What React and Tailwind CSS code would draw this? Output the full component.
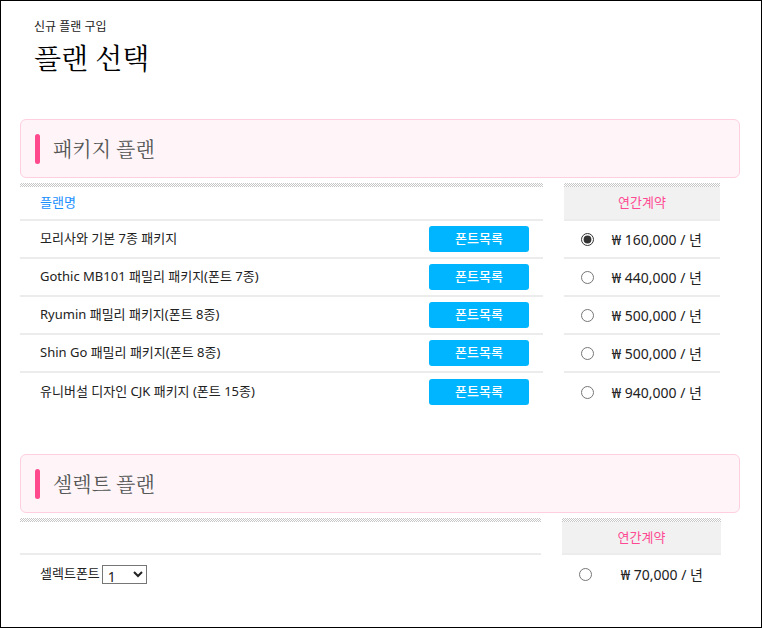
import React from 'react';

const SANS = { fontFamily: '"Noto Sans", "Noto Sans CJK KR", sans-serif' };
const SERIF = { fontFamily: '"Noto Serif CJK KR", "Liberation Serif", serif' };

const packages = [
  { name: '모리사와 기본 7종 패키지', price: '₩ 160,000 / 년', checked: true },
  { name: 'Gothic MB101 패밀리 패키지(폰트 7종)', price: '₩ 440,000 / 년' },
  { name: 'Ryumin 패밀리 패키지(폰트 8종)', price: '₩ 500,000 / 년' },
  { name: 'Shin Go 패밀리 패키지(폰트 8종)', price: '₩ 500,000 / 년' },
  { name: '유니버설 디자인 CJK 패키지 (폰트 15종)', price: '₩ 940,000 / 년' },
];

function Hatch() {
  return (
    <div className="h-[4px] bg-[repeating-conic-gradient(#c8c8c8_0_25%,#ffffff_0_50%)] bg-[length:2px_2px]" />
  );
}

function PlanHeader({ title }) {
  return (
    <div className="flex h-[59px] items-center rounded-[6px] border border-[#ffcfe0] bg-[#fff5f9] pl-[14px]">
      <span className="h-[30px] w-[5px] rounded-full bg-[#ff4a8d]" />
      <h2 className="ml-[13px] text-[20px] text-[#555]" style={SERIF}>
        {title}
      </h2>
    </div>
  );
}

export default function App() {
  return (
    <div className="h-[628px] w-[762px] overflow-hidden border border-black bg-white text-[#222]" style={SANS}>
      {/* page title */}
      <div className="pl-[33px] pt-[17px]">
        <p className="text-[12px] leading-[18px]">신규 플랜 구입</p>
        <h1 className="mt-[1px] text-[28px] leading-[40px] text-black" style={SERIF}>
          플랜 선택
        </h1>
      </div>

      {/* package plans */}
      <div className="ml-[19px] mt-[42px] w-[720px]">
        <PlanHeader title="패키지 플랜" />
        <div className="mt-[5px] flex gap-[21px]">
          <div className="w-[523px]">
            <Hatch />
            <div className="flex h-[34px] items-center border-b-2 border-[#ececec] pl-[20px] text-[13px] text-[#1a8fff]">
              플랜명
            </div>
            {packages.map((p, i) => (
              <div
                key={p.name}
                className={`flex h-[38px] items-center justify-between pl-[20px] pr-[14px] text-[13px] ${
                  i < packages.length - 1 ? 'border-b-2 border-[#ececec]' : ''
                }`}
              >
                <span>{p.name}</span>
                <button className="h-[26px] w-[100px] rounded-[3px] bg-[#00b5ff] text-[13px] font-medium text-white">
                  폰트목록
                </button>
              </div>
            ))}
          </div>
          <div className="w-[156px]">
            <Hatch />
            <div className="flex h-[34px] items-center justify-center border-b-2 border-[#ececec] bg-[#f1f1f1] text-[13px] text-[#ff4a93]">
              연간계약
            </div>
            {packages.map((p, i) => (
              <div
                key={p.price + i}
                className={`flex h-[38px] items-center pl-[17px] pr-[18px] text-[14px] ${
                  i < packages.length - 1 ? 'border-b-2 border-[#ececec]' : ''
                }`}
              >
                <input
                  type="radio"
                  name="pkg"
                  defaultChecked={!!p.checked}
                  className="m-0 h-[13px] w-[13px] accent-[#333]"
                />
                <span className="flex-1 text-right">{p.price}</span>
              </div>
            ))}
          </div>
        </div>
      </div>

      {/* select plans */}
      <div className="ml-[19px] mt-[43px] w-[720px]">
        <PlanHeader title="셀렉트 플랜" />
        <div className="mt-[5px] flex gap-[21px]">
          <div className="w-[521px]">
            <Hatch />
            <div className="h-[33px] border-b-2 border-[#ececec]" />
            <div className="flex h-[38px] items-center pl-[20px] text-[13px]">
              <span>셀렉트폰트</span>
              <select className="ml-[2px] h-[19px] w-[45px] border border-[#767676] bg-white pl-[1px] text-[14px] leading-none">
                <option>1</option>
                <option>2</option>
                <option>3</option>
              </select>
            </div>
          </div>
          <div className="w-[159px]">
            <Hatch />
            <div className="flex h-[33px] items-center justify-center border-b-2 border-[#ececec] bg-[#f1f1f1] text-[13px] text-[#ff4a93]">
              연간계약
            </div>
            <div className="flex h-[38px] items-center pl-[17px] pr-[18px] text-[14px]">
              <input type="radio" name="sel" className="m-0 h-[13px] w-[13px] accent-[#333]" />
              <span className="flex-1 text-right">₩ 70,000 / 년</span>
            </div>
          </div>
        </div>
      </div>
    </div>
  );
}
